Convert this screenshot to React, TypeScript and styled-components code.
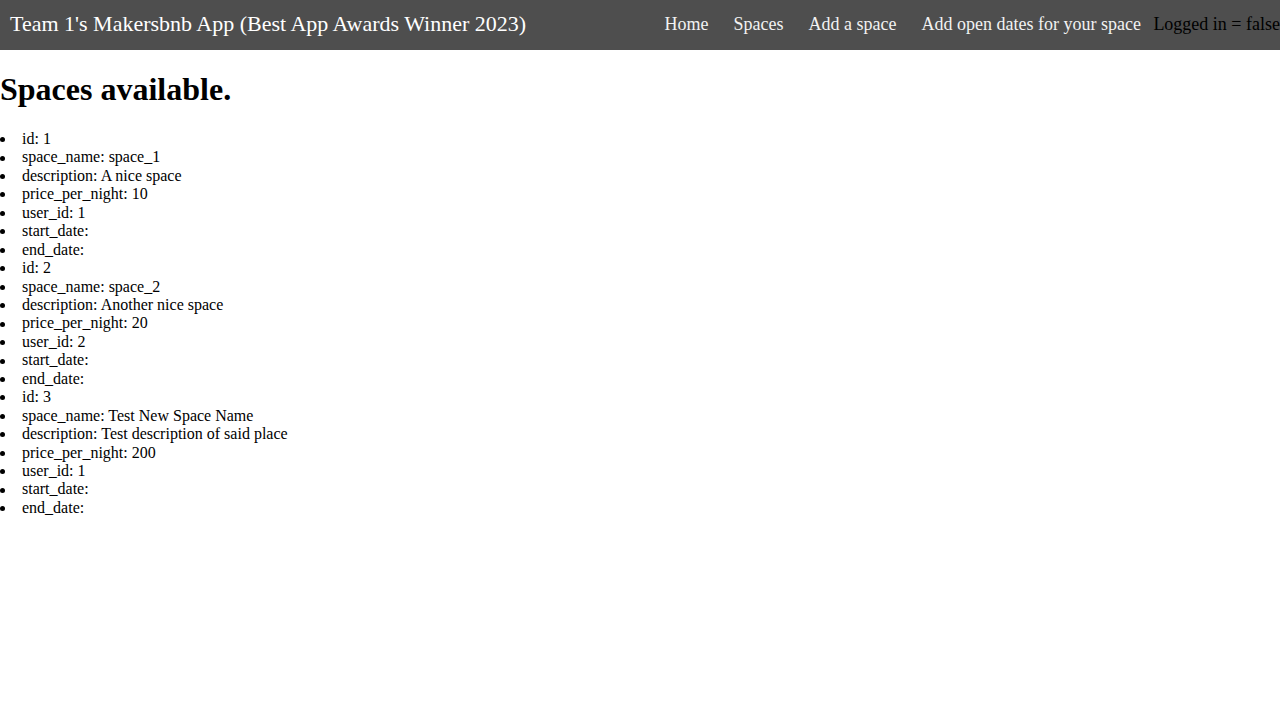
import React from "react";
import styled, { createGlobalStyle } from "styled-components";

const Global = createGlobalStyle`
  html, body { margin: 0; padding: 0; background: #fff; }
  body { font-family: "Liberation Serif", "Times New Roman", serif; color: #000; }
`;

const NavBar = styled.nav`
  box-sizing: border-box;
  display: flex;
  align-items: center;
  justify-content: space-between;
  height: 50px;
  padding-bottom: 2px;
  background: #4e4e4e;
  overflow: hidden;
`;

const Brand = styled.div`
  padding-left: 10px;
  font-size: 22px;
  color: #fff;
  white-space: nowrap;
`;

const Right = styled.div`
  display: flex;
  align-items: center;
  white-space: nowrap;
`;

const NavLink = styled.a`
  padding: 0 12.5px;
  font-size: 18px;
  color: #f2f2f2;
  text-decoration: none;
`;

const Status = styled.span`
  font-size: 18px;
  color: #000;
`;

const Title = styled.h1`
  font-size: 32px;
  margin: 21.44px 0;
`;

const List = styled.ul`
  margin: 16px 0;
  padding: 0;
  list-style: none;
  font-size: 16px;
  line-height: 18.45px;
`;

const Item = styled.li`
  display: flex;
  align-items: center;
  &::before {
    content: "";
    width: 5px;
    height: 5px;
    border-radius: 50%;
    background: #000;
    margin: 1px 17px 0 0;
    flex: none;
  }
`;

const spaces = [
  { id: 1, space_name: "space_1", description: "A nice space", price_per_night: 10, user_id: 1 },
  { id: 2, space_name: "space_2", description: "Another nice space", price_per_night: 20, user_id: 2 },
  { id: 3, space_name: "Test New Space Name", description: "Test description of said place", price_per_night: 200, user_id: 1 },
];

export default function App() {
  return (
    <>
      <Global />
      <NavBar>
        <Brand>Team 1's Makersbnb App (Best App Awards Winner 2023)</Brand>
        <Right>
          <NavLink href="#">Home</NavLink>
          <NavLink href="#">Spaces</NavLink>
          <NavLink href="#">Add a space</NavLink>
          <NavLink href="#">Add open dates for your space</NavLink>
          <Status>Logged in = false</Status>
        </Right>
      </NavBar>
      <Title>Spaces available.</Title>
      <List>
        {spaces.map((s) => (
          <React.Fragment key={s.id}>
            <Item>id: {s.id}</Item>
            <Item>space_name: {s.space_name}</Item>
            <Item>description: {s.description}</Item>
            <Item>price_per_night: {s.price_per_night}</Item>
            <Item>user_id: {s.user_id}</Item>
            <Item>start_date: </Item>
            <Item>end_date: </Item>
          </React.Fragment>
        ))}
      </List>
    </>
  );
}
